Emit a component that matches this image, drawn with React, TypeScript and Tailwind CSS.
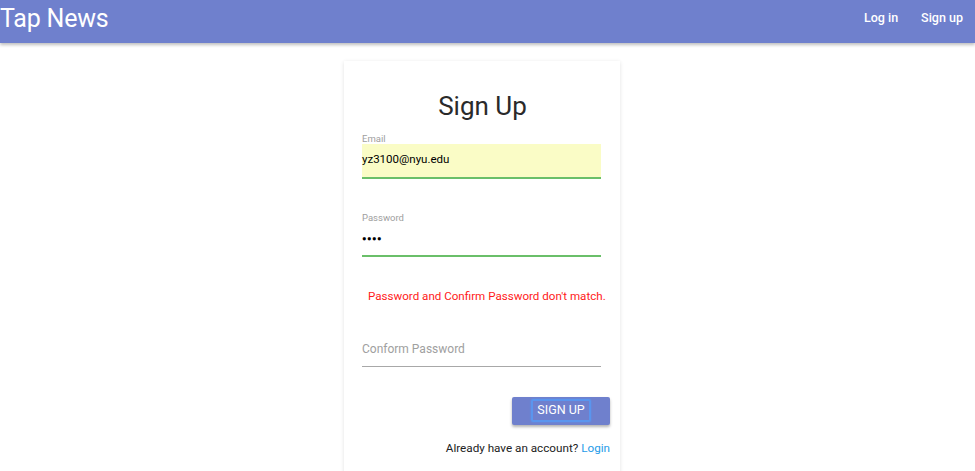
export default function App() {
  const font = { fontFamily: 'Roboto, "Liberation Sans", sans-serif' };
  return (
    <div className="min-h-[471px] bg-white relative overflow-hidden" style={font}>
      <nav className="h-[43px] bg-[#6f80cd] flex items-center justify-between shadow-[0_2px_3px_rgba(0,0,0,0.25)] relative z-10">
        <div className="text-white text-[25px] leading-none -mt-[6px] tracking-[-0.2px]">Tap News</div>
        <div className="flex items-center text-white text-[12.5px] font-medium gap-[23px] pr-[12px] -mt-[6px]">
          <span>Log in</span>
          <span>Sign up</span>
        </div>
      </nav>
      <div className="ml-[344px] mt-[18px] w-[276px] h-[420px] bg-white shadow-[0_1px_4px_rgba(0,0,0,0.12)] flex flex-col">
        <h1 className="text-[26px] leading-none text-[#2a2a2a] text-center mt-[32px] pl-[1px]">Sign Up</h1>
        <div className="ml-[18px] w-[239px] mt-[15px]">
          <div className="text-[9.5px] text-[#9e9e9e] leading-none">Email</div>
          <div className="h-[35px] bg-[#fafcc6] border-b-2 border-[#6abf69] flex items-center text-[11.5px] text-black">
            yz3100@nyu.edu
          </div>
        </div>
        <div className="ml-[18px] w-[239px] mt-[34px]">
          <div className="text-[9.5px] text-[#9e9e9e] leading-none">Password</div>
          <div className="h-[35px] border-b-2 border-[#6abf69] flex items-center text-black pt-[1px]">
            <span className="text-[7.5px] tracking-[0.5px]">●●●●</span>
          </div>
        </div>
        <div className="mt-[34px] text-[11.6px] text-[#ff1a1a] leading-none pl-[24px] whitespace-nowrap">
          Password and Confirm Password don't match.
        </div>
        <div className="ml-[18px] w-[239px] mt-[40px] h-[24px] border-b border-[#a8a8a8] text-[12px] text-[#a0a0a0] leading-none">
          Conform Password
        </div>
        <div className="flex justify-end pr-[10px] mt-[30px]">
          <button className="w-[98px] h-[28px] bg-[#6f80cd] rounded-[2px] shadow-[0_2px_3px_rgba(0,0,0,0.3)] flex items-center justify-center">
            <span className="text-white text-[12.5px] leading-none px-[4px] py-[3px] border-2 border-[#5a95ee] rounded-[2px] shadow-[0_0_2px_#5a95ee]">SIGN UP</span>
          </button>
        </div>
        <div className="flex justify-end pr-[10px] mt-[18px] text-[11.7px] text-[#222] leading-none">
          <span>Already have an account?&nbsp;</span>
          <span className="text-[#1e9be8]">Login</span>
        </div>
      </div>
    </div>
  );
}
